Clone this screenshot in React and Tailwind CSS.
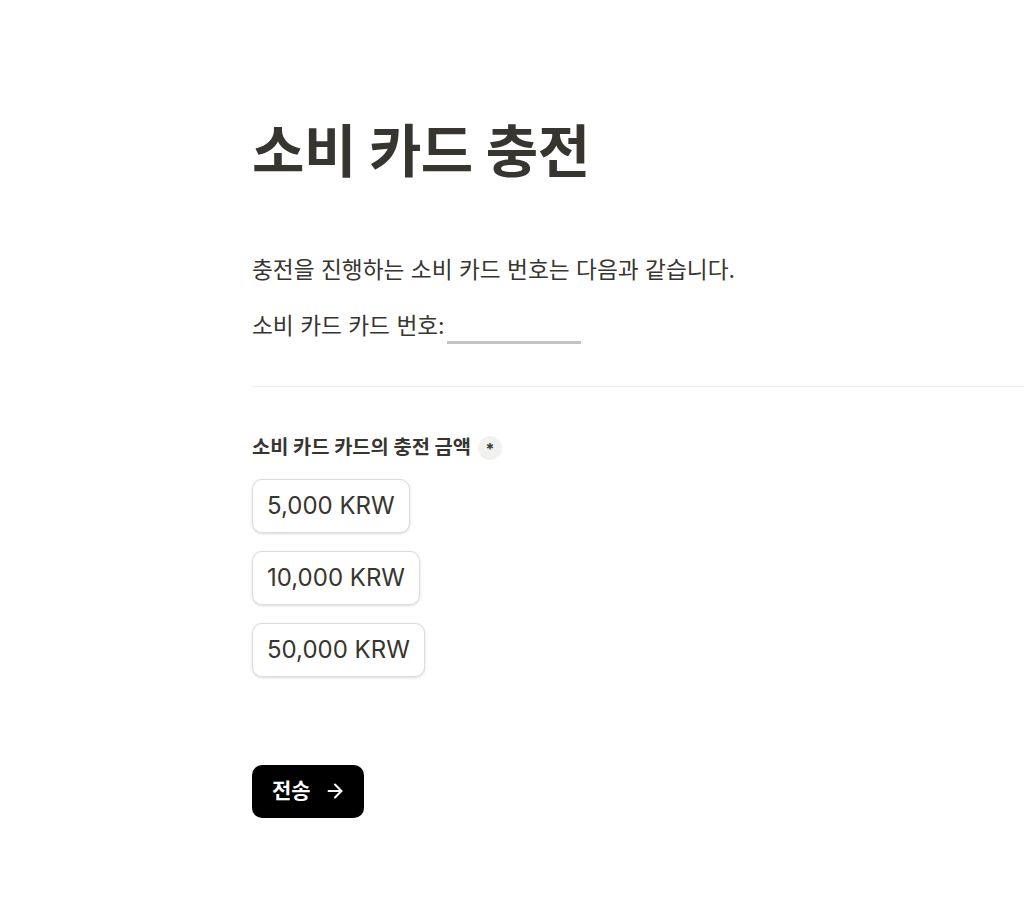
import { ArrowRight } from "lucide-react"

const amounts = ["5,000 KRW", "10,000 KRW", "50,000 KRW"]

export default function App() {
  return (
    <div
      className="min-h-[915px] bg-white text-[#37352f]"
      style={{ fontFamily: "Inter, 'Noto Sans CJK KR', sans-serif" }}
    >
      <div className="pl-[252px] pt-[112px]">
        {/* Title */}
        <h1 className="text-[57px] font-bold leading-[80px] tracking-[-0.5px]">소비 카드 충전</h1>

        {/* Description */}
        <div className="mt-[62px] text-[22.7px] leading-[32px] text-[#37352f]">
          <p>충전을 진행하는 소비 카드 번호는 다음과 같습니다.</p>
          <p className="mt-[24px] flex items-end">
            <span>소비 카드 카드 번호:</span>
            <span className="-mb-[2px] ml-[2px] inline-block h-[3px] w-[134px] bg-[#c4c4c4]" />
          </p>
        </div>

        <div className="mt-[44px] h-px bg-[#ececec]" />

        {/* Amount options */}
        <div className="mt-[46px] flex items-center gap-[7px]">
          <span className="text-[19.8px] font-bold">소비 카드 카드의 충전 금액</span>
          <span className="flex h-[24px] w-[24px] items-center justify-center rounded-full bg-[#f1f1ef] pt-[2px] text-[16px] font-bold">
            *
          </span>
        </div>

        <div className="mt-[16px] flex flex-col items-start gap-[18px]">
          {amounts.map((a) => (
            <button
              key={a}
              className="h-[54px] rounded-[10px] border border-[#dcdcdc] bg-white px-[14px] text-[24px] text-[#37352f] shadow-[0_1px_3px_rgba(0,0,0,0.15)]"
            >
              {a}
            </button>
          ))}
        </div>

        <button className="mt-[88px] flex h-[53px] items-center gap-[13px] rounded-[10px] bg-black pl-[20px] pr-[18px] text-[21px] font-bold text-white">
          전송
          <ArrowRight size={22} strokeWidth={2.2} />
        </button>
      </div>
    </div>
  )
}
